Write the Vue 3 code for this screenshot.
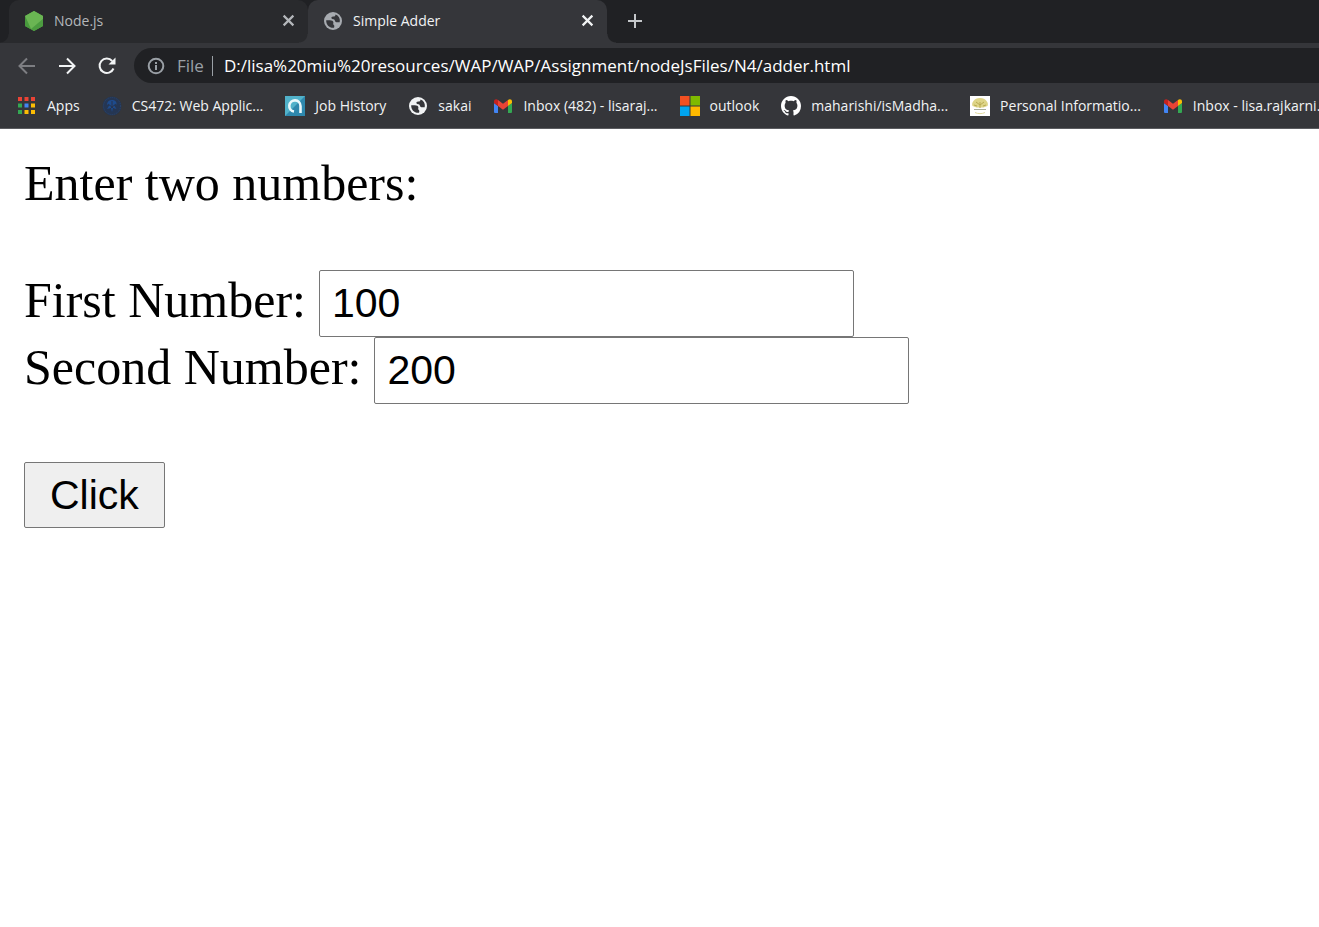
<script setup>
import { ref } from 'vue'

const first = ref('100')
const second = ref('200')
const result = ref(null)

const bookmarks = [
  { icon: 'apps', label: 'Apps' },
  { icon: 'seal', label: 'CS472: Web Applic...' },
  { icon: 'job', label: 'Job History' },
  { icon: 'globe', label: 'sakai' },
  { icon: 'gmail', label: 'Inbox (482) - lisaraj...' },
  { icon: 'microsoft', label: 'outlook' },
  { icon: 'github', label: 'maharishi/isMadha...' },
  { icon: 'tree', label: 'Personal Informatio...' },
  { icon: 'gmail', label: 'Inbox - lisa.rajkarni...' },
]

const appColors = ['#ea4335', '#ea4335', '#ea4335', '#34a853', '#4285f4', '#fbbc04', '#34a853', '#fbbc04', '#fbbc04']

const globeSea =
  'M12.500 3.500c0 1.800-1 2-2.300 2-1.500 0-2 .8-1.700 1.700.3 1 1.300.8 2.300 1.100 1.200.4.900 1.900 1.900 2.600.8.600 2.300.3 4 .3C17.500 7.500 15.500 4.500 12.500 3.500z' +
  'M3.200 9.200h3.600c2 0 3.600.8 3.600 2.400 0 1-.6 1.600.2 2.200.7.500 1 1.400.4 2.900C6.500 17.200 3 13.800 3.200 9.200z'

function add() {
  result.value = Number(first.value) + Number(second.value)
}
</script>

<template>
  <div class="browser">
    <header class="chrome">
      <div class="tabs">
        <div class="tab">
          <svg class="fav" viewBox="0 0 20 20" aria-hidden="true">
            <path fill="#58a846" d="M10 0l9 5v10l-9 5-9-5V5z" />
            <path fill="#6ab553" d="M10 0l9 5v3L7 18 1 5z" />
            <path fill="#489a3d" d="M1 5l6 13.300L1 15z" />
            <path fill="#4c9c40" d="M19 8v7l-9 5-3-1.700z" />
          </svg>
          <span class="title">Node.js</span>
          <button class="close" aria-label="Close Node.js">
            <svg viewBox="0 0 12 12"><path d="M1.500 1.500l9 9M10.500 1.500l-9 9" /></svg>
          </button>
        </div>
        <div class="tab active">
          <svg class="fav" viewBox="0 0 20 20" aria-hidden="true">
            <circle cx="10" cy="10" r="9" fill="#a7abb0" />
            <path fill="#35363a" :d="globeSea" />
          </svg>
          <span class="title">Simple Adder</span>
          <button class="close" aria-label="Close Simple Adder">
            <svg viewBox="0 0 12 12"><path d="M1.500 1.500l9 9M10.500 1.500l-9 9" /></svg>
          </button>
        </div>
        <button class="new-tab" aria-label="New tab">
          <svg viewBox="0 0 16 16"><path d="M8 1v14M1 8h14" /></svg>
        </button>
      </div>

      <div class="toolbar">
        <button class="nav back" aria-label="Back">
          <svg viewBox="0 0 20 20"><path d="M18 10H3M10 2.500L2.500 10l7.500 7.500" /></svg>
        </button>
        <button class="nav" aria-label="Forward">
          <svg viewBox="0 0 20 20"><path d="M2 10h15M10 2.500l7.500 7.500-7.500 7.500" /></svg>
        </button>
        <button class="nav" aria-label="Reload">
          <svg viewBox="0 0 20 20">
            <path d="M16.500 12.500a7.200 7.200 0 1 1-1.300-7.500" />
            <path class="solid" d="M18.500 1.500v7h-7z" />
          </svg>
        </button>
        <div class="omnibox">
          <svg class="info" viewBox="0 0 18 18" aria-hidden="true">
            <circle cx="9" cy="9" r="7.300" />
            <path d="M9 8v5M9 5v2" />
          </svg>
          <span class="scheme">File</span>
          <span class="divider"></span>
          <input
            class="url"
            aria-label="Address"
            value="D:/lisa%20miu%20resources/WAP/WAP/Assignment/nodeJsFiles/N4/adder.html"
          />
        </div>
      </div>

      <nav class="bookmarks" aria-label="Bookmarks">
        <a v-for="(b, i) in bookmarks" :key="i" href="#" class="bookmark">
          <svg v-if="b.icon === 'apps'" class="icon" viewBox="0 0 20 20">
            <rect
              v-for="(c, n) in appColors"
              :key="n"
              :x="1 + (n % 3) * 6.500"
              :y="1 + Math.floor(n / 3) * 6.500"
              width="4"
              height="4"
              :fill="c"
            />
          </svg>
          <svg v-else-if="b.icon === 'seal'" class="icon" viewBox="0 0 20 20">
            <circle cx="10" cy="10" r="9.500" fill="#253653" />
            <circle cx="10" cy="10" r="8.500" fill="none" stroke="#29466f" stroke-dasharray="1 1" />
            <path fill="#1e4b8d" d="M10 4c3 0 5 2 4.500 4.500L12 9l2.500 4L11 12l-1 4-1-4-4 1 2.500-4L5 8.500C5 6 7 4 10 4z" />
            <path stroke="#263550" fill="none" d="M6 8l4 3 4-3M10 5v6M7 14l3-3 3 3" />
          </svg>
          <svg v-else-if="b.icon === 'job'" class="icon" viewBox="0 0 20 20">
            <path fill="#2e88ad" d="M0 0h20v20H0z" />
            <path fill="#51b2ca" d="M0 0h20L0 20z" />
            <path fill="none" stroke="#e9f8fb" stroke-width="2.600" d="M9 15.500A5.600 5.600 0 1 1 15.500 10v7" />
          </svg>
          <svg v-else-if="b.icon === 'globe'" class="icon" viewBox="0 0 20 20">
            <circle cx="10" cy="10" r="9" fill="#f1f3f4" />
            <path fill="#35363a" :d="globeSea" />
          </svg>
          <svg v-else-if="b.icon === 'gmail'" class="icon" viewBox="0 0 20 20">
            <path fill="#4285f4" d="M1 7l4 3v7H2.300C1.500 17 1 16.500 1 15.700z" />
            <path fill="#34a853" d="M15 10l4-3v8.700c0 .8-.5 1.300-1.300 1.300H15z" />
            <path fill="#c5221f" d="M1 5.500C1 3.400 3.200 2.700 5 4v6L1 7z" />
            <path fill="#fbbc04" d="M15 4c1.800-1.300 4-.6 4 1.500V7l-4 3z" />
            <path fill="#ea4335" d="M5 4l5 3.800L15 4v6l-5 3.800L5 10z" />
          </svg>
          <svg v-else-if="b.icon === 'microsoft'" class="icon" viewBox="0 0 20 20">
            <path fill="#f25022" d="M0 0h9.500v9.500H0z" />
            <path fill="#7fba00" d="M10.500 0H20v9.500h-9.500z" />
            <path fill="#00a4ef" d="M0 10.500h9.500V20H0z" />
            <path fill="#ffb900" d="M10.500 10.500H20V20h-9.500z" />
          </svg>
          <svg v-else-if="b.icon === 'github'" class="icon" viewBox="0 0 16 16">
            <path
              fill="#fff"
              d="M8 0C3.580 0 0 3.580 0 8c0 3.540 2.290 6.530 5.470 7.590.4.070.55-.17.55-.38 0-.19-.01-.82-.01-1.490-2.010.37-2.530-.49-2.690-.94-.09-.23-.48-.94-.82-1.130-.28-.15-.68-.52-.01-.53.63-.01 1.080.58 1.230.82.72 1.210 1.870.87 2.330.66.070-.52.28-.87.51-1.070-1.780-.2-3.640-.89-3.640-3.950 0-.87.31-1.590.82-2.150-.08-.2-.36-1.020.08-2.120 0 0 .67-.21 2.200.82.64-.18 1.320-.27 2-.27s1.360.09 2 .27c1.530-1.040 2.200-.82 2.200-.82.44 1.100.16 1.920.08 2.120.51.56.82 1.270.82 2.150 0 3.070-1.870 3.750-3.650 3.950.29.25.54.73.54 1.480 0 1.070-.01 1.930-.01 2.200 0 .21.15.46.55.38A8.010 8.010 0 0 0 16 8c0-4.420-3.580-8-8-8z"
            />
          </svg>
          <svg v-else class="icon" viewBox="0 0 20 20">
            <path fill="#fff" d="M0 0h20v20H0z" />
            <path fill="#ded586" d="M2.500 10C1 7 4 2 10 2s9 5 7.500 8l-4 1.500h-7z" />
            <path fill="none" stroke="#b9ab52" d="M10 12V6M10 9L6 6M10 9l4-3M4 9l3 1M16 9l-3 1" />
            <path fill="none" stroke="#a9af99" d="M4 13.500h12" />
            <path fill="none" stroke="#e2dba0" d="M5 16.500c3 1.500 7 1.500 10 0" />
          </svg>
          <span>{{ b.label }}</span>
        </a>
      </nav>
    </header>

    <main class="page">
      <p class="intro">Enter two numbers:</p>
      <form @submit.prevent="add">
        <div class="row">
          <label for="first">First Number:</label>
          <input id="first" v-model="first" type="text" />
        </div>
        <div class="row">
          <label for="second">Second Number:</label>
          <input id="second" v-model="second" type="text" />
        </div>
        <button class="submit" type="submit">Click</button>
      </form>
      <p v-if="result !== null" class="intro">{{ result }}</p>
    </main>
  </div>
</template>

<style>
body {
  margin: 0;
  background: #fff;
}
</style>

<style scoped>
.browser {
  overflow: hidden;
}
.chrome {
  background: #35363a;
  color: #f1f3f4;
  font-family: "Open Sans", "Noto Sans", sans-serif;
  font-size: 14px;
  border-bottom: 1px solid #5b5c60;
}
.chrome button {
  border: 0;
  padding: 0;
  background: none;
  color: inherit;
  display: grid;
  place-items: center;
}
svg {
  display: block;
  flex: none;
}
.tabs {
  display: flex;
  height: 43px;
  padding-left: 9px;
  background: #202124;
}
.tab {
  position: relative;
  box-sizing: border-box;
  display: flex;
  align-items: center;
  flex: 0 1 299px;
  padding: 0 13px 2px 15px;
  background: #292a2d;
  color: #b4b7bb;
  border-radius: 10px 10px 0 0;
}
.tab.active {
  background: #35363a;
  color: #f1f3f4;
}
.tab::before,
.tab.active::after {
  content: "";
  position: absolute;
  bottom: 0;
  width: 9px;
  height: 9px;
}
.tab::before {
  right: 100%;
  background: radial-gradient(circle at 0 0, transparent 8px, #292a2d 9px);
}
.tab.active::before {
  background: radial-gradient(circle at 0 0, transparent 8px, #35363a 9px);
}
.tab.active::after {
  left: 100%;
  background: radial-gradient(circle at 100% 0, transparent 8px, #35363a 9px);
}
.fav {
  width: 20px;
  height: 20px;
}
.title {
  flex: 1;
  margin-left: 10px;
}
.close svg {
  width: 13px;
  height: 13px;
}
.close path,
.new-tab path {
  fill: none;
  stroke: currentColor;
  stroke-width: 2;
}
.new-tab {
  width: 56px;
  height: 42px;
}
.chrome .new-tab {
  color: #c4c7ca;
}
.new-tab svg {
  width: 16px;
  height: 16px;
}
.toolbar {
  display: flex;
  align-items: center;
  gap: 20px;
  padding: 5px 0 0 17px;
}
.nav svg {
  width: 20px;
  height: 20px;
  fill: none;
  stroke: #f1f3f4;
  stroke-width: 2;
}
.nav.back svg {
  stroke: #7d7e82;
}
.nav .solid {
  fill: #f1f3f4;
  stroke: none;
}
.omnibox {
  flex: 1;
  display: flex;
  align-items: center;
  height: 35px;
  margin-left: -3px;
  padding-left: 13px;
  background: #202124;
  border-radius: 18px 0 0 18px;
  font-size: 17px;
}
.info {
  width: 18px;
  height: 18px;
  fill: none;
  stroke: #9aa0a6;
  stroke-width: 2;
}
.scheme {
  margin-left: 12px;
  color: #9aa0a6;
}
.divider {
  width: 1px;
  height: 20px;
  margin: 0 11px 0 8px;
  background: #9aa0a6;
}
.url {
  flex: 1;
  min-width: 0;
  border: 0;
  padding: 0;
  outline: 0;
  background: none;
  color: #fff;
  font: inherit;
}
.bookmarks {
  display: flex;
  align-items: center;
  gap: 22px;
  height: 45px;
  padding-left: 17px;
}
.bookmark {
  display: flex;
  align-items: center;
  flex: none;
  gap: 10px;
  color: inherit;
  text-decoration: none;
  white-space: nowrap;
}
.icon {
  width: 20px;
  height: 20px;
}
.page {
  padding: 25px 24px;
  color: #000;
  font-family: "Liberation Serif", "Times New Roman", serif;
  font-size: 50px;
  line-height: 58px;
}
.intro {
  margin: 0 0 58px;
}
.row {
  display: flex;
  align-items: baseline;
  gap: 13px;
}
.row label {
  white-space: nowrap;
}
.row input,
.submit {
  box-sizing: border-box;
  border: 1px solid #767676;
  border-radius: 2px;
  color: #000;
  font-family: "Liberation Sans", Arial, sans-serif;
  font-size: 41px;
}
.row input {
  width: 535px;
  height: 67px;
  padding: 0 12px;
  background: #fff;
}
.submit {
  display: block;
  height: 66px;
  margin-top: 58px;
  padding: 0 25px;
  background: #efefef;
}
</style>
